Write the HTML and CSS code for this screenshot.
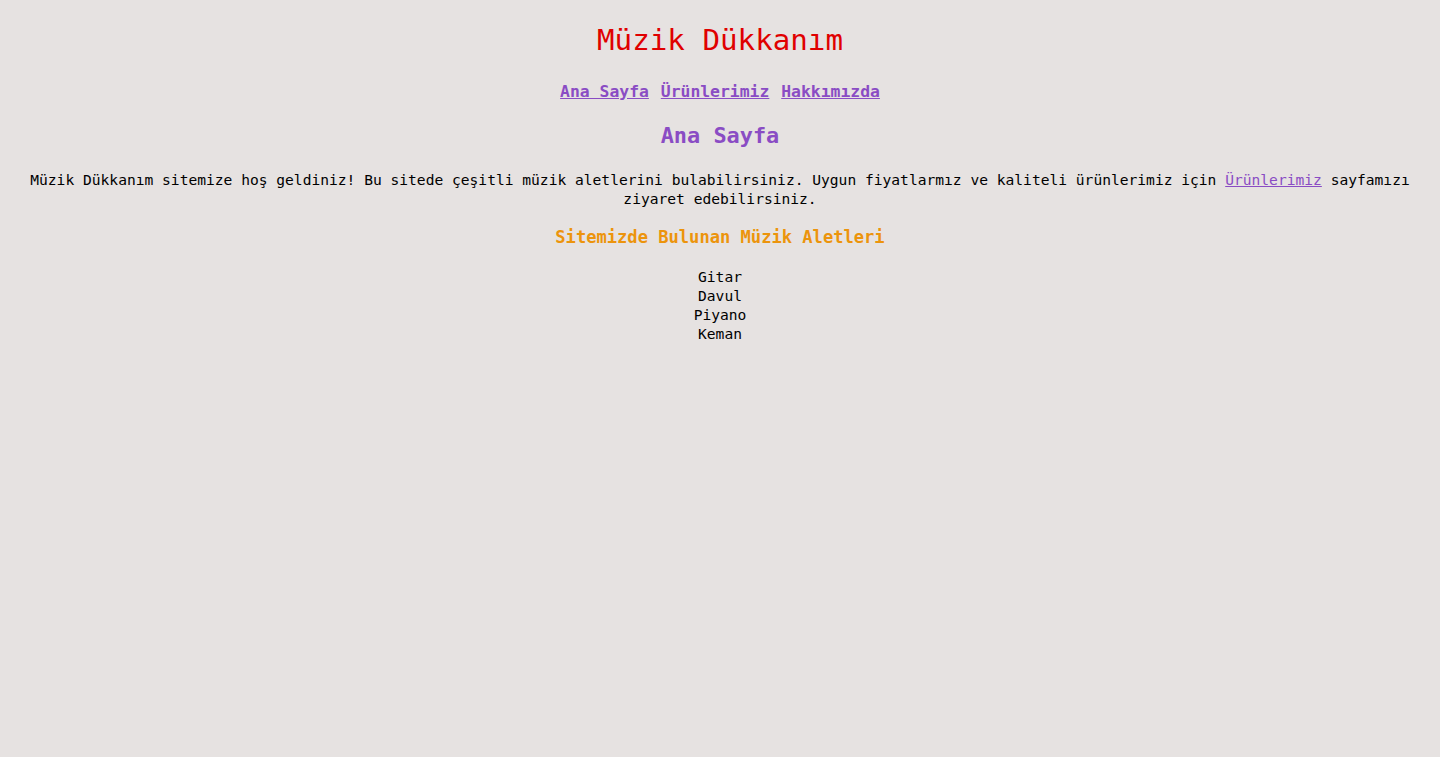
FILE: index.html
```html
<!DOCTYPE html>
<html lang="tr">
<head>
<meta charset="utf-8">
<title>Müzik Dükkanım</title>
<link rel="stylesheet" href="styles.css">
</head>
<body class="page">
  <h1 class="site-title">Müzik Dükkanım</h1>
  <nav class="main-nav">
    <a class="nav-link" href="#">Ana Sayfa</a>
    <a class="nav-link" href="#">Ürünlerimiz</a>
    <a class="nav-link" href="#">Hakkımızda</a>
  </nav>
  <h2 class="page-title">Ana Sayfa</h2>
  <p class="intro">Müzik Dükkanım sitemize hoş geldiniz! Bu sitede çeşitli müzik aletlerini bulabilirsiniz. Uygun fiyatlarmız ve kaliteli ürünlerimiz için <a class="text-link" href="#">Ürünlerimiz</a> sayfamızı ziyaret edebilirsiniz.</p>
  <h3 class="section-title">Sitemizde Bulunan Müzik Aletleri</h3>
  <ul class="instrument-list">
    <li class="instrument">Gitar</li>
    <li class="instrument">Davul</li>
    <li class="instrument">Piyano</li>
    <li class="instrument">Keman</li>
  </ul>
</body>
</html>
```

FILE: styles.css
```css
html {
  background: #e6e2e1;
}

.page {
  margin: 0 8px 8px;
  padding: 0;
  background: #e6e2e1;
  font-family: "DejaVu Sans Mono", "Liberation Mono", monospace;
  font-size: 14.6px;
  line-height: 19px;
  color: #000;
  text-align: center;
}

.site-title {
  margin: 21.5px 0;
  font-size: 29.2px;
  line-height: 37.5px;
  font-weight: normal;
  color: #e00000;
}

.main-nav {
  font-size: 16.4px;
  line-height: 21px;
  font-weight: bold;
}

.nav-link {
  margin: 0 1px;
  color: #8a4cc4;
  text-decoration: underline;
}

.page-title {
  margin: 20px 0;
  font-size: 21.9px;
  line-height: 28px;
  font-weight: bold;
  color: #8a4cc4;
}

.intro {
  margin: 0;
  padding: 0 4px;
  font-size: 14.6px;
  line-height: 19px;
}

.text-link {
  color: #8a4cc4;
  text-decoration: underline;
}

.section-title {
  margin: 18.7px 0;
  font-size: 17.1px;
  line-height: 22px;
  font-weight: bold;
  color: #ec940c;
}

.instrument-list {
  margin: 0;
  padding: 0;
  list-style: none;
}

.instrument {
  font-size: 14.6px;
  line-height: 19px;
}
```
